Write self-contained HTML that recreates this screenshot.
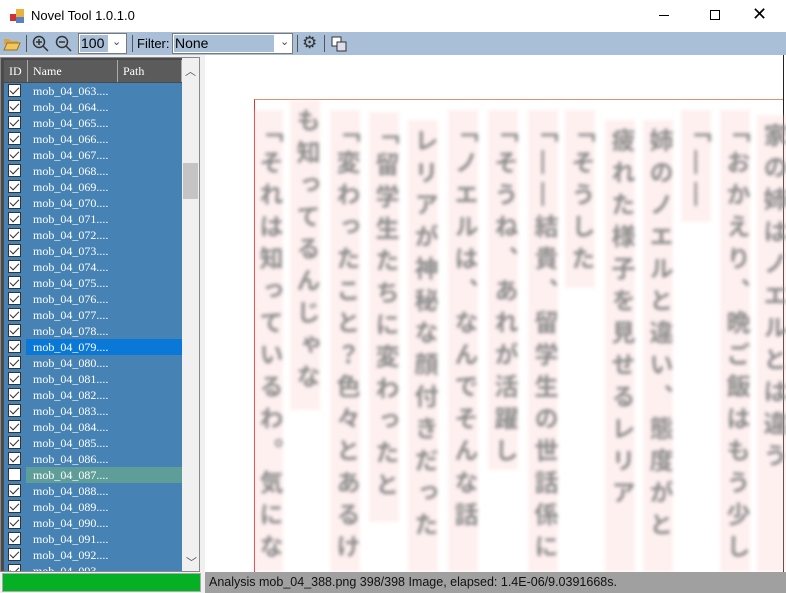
<!DOCTYPE html>
<html><head><meta charset="utf-8"><style>
*{margin:0;padding:0;box-sizing:border-box}
body{width:786px;height:593px;overflow:hidden;background:#f0f0f0;font-family:"Liberation Sans","Noto Sans CJK JP",sans-serif;position:relative}
.abs{position:absolute}
#title{left:0;top:0;width:786px;height:32px;background:#fff;font-size:13px}
#tb{left:0;top:32px;width:786px;height:23px;background:#a9bfd7}
#list{left:0;top:57px;width:200px;height:515px;background:#4a4a4a;border:1px solid #888}
.hdr{position:absolute;top:2px;height:22px;background:#5b5b5b;color:#fff;font:12px "Liberation Serif",serif;line-height:22px;border-right:1px solid #aaa;padding-left:5px}
.row{position:absolute;left:3px;width:178px;height:16px;background:#4682b4;color:#fff;font:12px "Liberation Serif",serif;line-height:16px}
.row .cb{position:absolute;left:4px;top:1px;width:13px;height:13px;background:#fff;border:1px solid #333}
.row .cb.on::after{content:"";position:absolute;left:3px;top:0px;width:4px;height:8px;border:solid #333;border-width:0 1.5px 1.5px 0;transform:rotate(45deg)}
.row .nm{position:absolute;left:22px;top:0;width:156px;height:16px;padding-left:7px}
#right{left:205px;top:55px;width:581px;height:517px;background:#fff}
.col{position:absolute;writing-mode:vertical-rl;font-size:24px;line-height:30px;width:30px;color:#8a8a8a;filter:blur(1.8px);background:rgba(255,205,205,0.3);overflow:hidden;letter-spacing:8px;padding-top:8px;font-weight:bold}
</style></head><body>
<div id="title" class="abs">
 <svg class="abs" style="left:9px;top:8px" width="16" height="16"><rect x="1" y="6" width="7" height="7" fill="#c33"/><rect x="7" y="1" width="8" height="8" fill="#e8b33a"/><rect x="7" y="9" width="8" height="6" fill="#5b7fc7"/></svg>
 <div class="abs" style="left:31px;top:8px;color:#000">Novel Tool 1.0.1.0</div>
 <div class="abs" style="left:659px;top:15px;width:10px;height:1px;background:#000"></div>
 <div class="abs" style="left:710px;top:10px;width:10px;height:10px;border:1px solid #000"></div>
 <div class="abs" style="left:752px;top:4px;font-size:18px">✕</div>
</div>
<div id="tb" class="abs">
 <svg class="abs" style="left:3px;top:3px" width="18" height="17"><path d="M1 4h5l2 2h7v3H1z" fill="#d9a441"/><path d="M1 15L4 8h13l-3 7z" fill="#f0c65e" stroke="#a07020"/></svg>
 <div class="abs" style="left:26px;top:3px;width:1px;height:17px;background:#555"></div>
 <svg class="abs" style="left:32px;top:3px" width="18" height="18"><circle cx="7" cy="7" r="5.5" fill="none" stroke="#333" stroke-width="1.5"/><path d="M11 11l5 5M4 7h6M7 4v6" stroke="#333" stroke-width="1.5"/></svg>
 <svg class="abs" style="left:55px;top:3px" width="18" height="18"><circle cx="7" cy="7" r="5.5" fill="none" stroke="#333" stroke-width="1.5"/><path d="M11 11l5 5M4 7h6" stroke="#333" stroke-width="1.5"/></svg>
 <div class="abs" style="left:78px;top:1px;width:49px;height:21px;background:#fff;border:1px solid #7a7a7a"><div class="abs" style="left:1px;top:1px;width:28px;height:17px;background:#a9bfd7;font-size:14px;line-height:17px;padding-left:1px">100</div><div class="abs" style="left:33px;top:1px;font-size:11px;color:#444">⌄</div></div>
 <div class="abs" style="left:132px;top:3px;width:1px;height:17px;background:#555"></div>
 <div class="abs" style="left:137px;top:4px;font-size:13px">Filter:</div>
 <div class="abs" style="left:172px;top:1px;width:121px;height:21px;background:#fff;border:1px solid #7a7a7a"><div class="abs" style="left:1px;top:1px;width:100px;height:17px;background:#a9bfd7;font-size:14px;line-height:17px;padding-left:1px">None</div><div class="abs" style="left:107px;top:1px;font-size:11px;color:#444">⌄</div></div>
 <div class="abs" style="left:297px;top:3px;width:1px;height:17px;background:#555"></div>
 <div class="abs" style="left:302px;top:1px;font-size:17px;color:#333">⚙</div>
 <div class="abs" style="left:324px;top:3px;width:1px;height:17px;background:#555"></div>
 <svg class="abs" style="left:331px;top:4px" width="16" height="16"><rect x="1" y="1" width="9" height="9" fill="#fff" stroke="#333"/><rect x="6" y="6" width="9" height="9" fill="#dde" stroke="#333"/></svg>
</div>
<div id="list" class="abs">
 <div class="hdr" style="left:3px;width:24px">ID</div>
 <div class="hdr" style="left:27px;width:90px">Name</div>
 <div class="hdr" style="left:117px;width:64px">Path</div>
 <div class="abs" style="left:181px;top:0;width:17px;height:513px;background:#f0f0f0"></div>
 <div class="abs" style="left:184px;top:5px;font-size:11px;color:#555">︿</div>
 <div class="abs" style="left:182px;top:105px;width:15px;height:36px;background:#c4c4c4"></div>
 <div class="abs" style="left:185px;top:496px;font-size:11px;color:#555">﹀</div>
 <div id="rows"></div>
</div>
<div class="abs" style="left:200px;top:55px;width:5px;height:517px;background:#f0f0f0"></div>
<div id="right" class="abs">
 <div class="abs" style="left:49px;top:44px;width:530px;height:475px;border-top:1px solid #e29070;border-left:1px solid #d33"></div>
 <div class="abs" style="left:578px;top:0;width:1px;height:517px;background:#222"></div>
</div>
<div class="abs" style="left:0;top:572px;width:202px;height:21px;background:#f0f0f0"><div class="abs" style="left:2px;top:1px;width:199px;height:19px;background:#06b025;border:1px solid #aaa"></div></div>
<div class="abs" style="left:205px;top:572px;width:581px;height:21px;background:#a0a0a0;font-size:12.5px;line-height:20px;padding-left:4px;color:#111">Analysis mob_04_388.png 398/398 Image, elapsed: 1.4E-06/9.0391668s.</div>
<script>
var r=document.getElementById('rows'),h='';
for(var i=0;i<31;i++){var n=63+i,y=25+i*16,bg=n==79?'#0a78d7':n==87?'#5f9e98':'#4682b4';
h+='<div class="row" style="top:'+y+'px;'+(y+16>513?'height:'+(513-y)+'px;overflow:hidden':'')+'"><div class="cb'+(n==87?'':' on')+'"></div><div class="nm" style="background:'+bg+'">mob_04_0'+n+'....</div></div>';}
r.innerHTML=h;
var cols=[[268,110,572,'「それは知っているわ。気になるのはあ'],[305,100,410,'も知ってるんじゃないの？'],[345,110,572,'「変わったこと？色々とあるけど、みん'],[384,112,522,'「留学生たちに変わったとこはない？」'],[423,120,572,'レリアが神秘な顔付きだったので、僕の'],[463,110,572,'「ノエルは、なんでそんな話を？」という'],[503,110,470,'「そうね、あれが活躍したから私'],[543,110,572,'「――結貴、留学生の世話係に選ばれてい'],[580,110,288,'「そうしたのよ？'],[620,120,572,'疲れた様子を見せるレリアを、ノエルは心'],[658,120,572,'姉のノエルと違い、態度がとても冷たかっ'],[696,110,222,'「――そう」'],[735,110,572,'「おかえり、晩ご飯はもう少しで出来るわ'],[772,115,572,'家の姉はノエルとは違う']];
var rt=document.getElementById('right');
cols.forEach(function(c){var d=document.createElement('div');d.className='col';d.style.left=(c[0]-205-15)+'px';d.style.top=(c[1]-55)+'px';d.style.height=(c[2]-c[1])+'px';d.textContent=c[3];rt.appendChild(d);});
</script>
</body></html>
